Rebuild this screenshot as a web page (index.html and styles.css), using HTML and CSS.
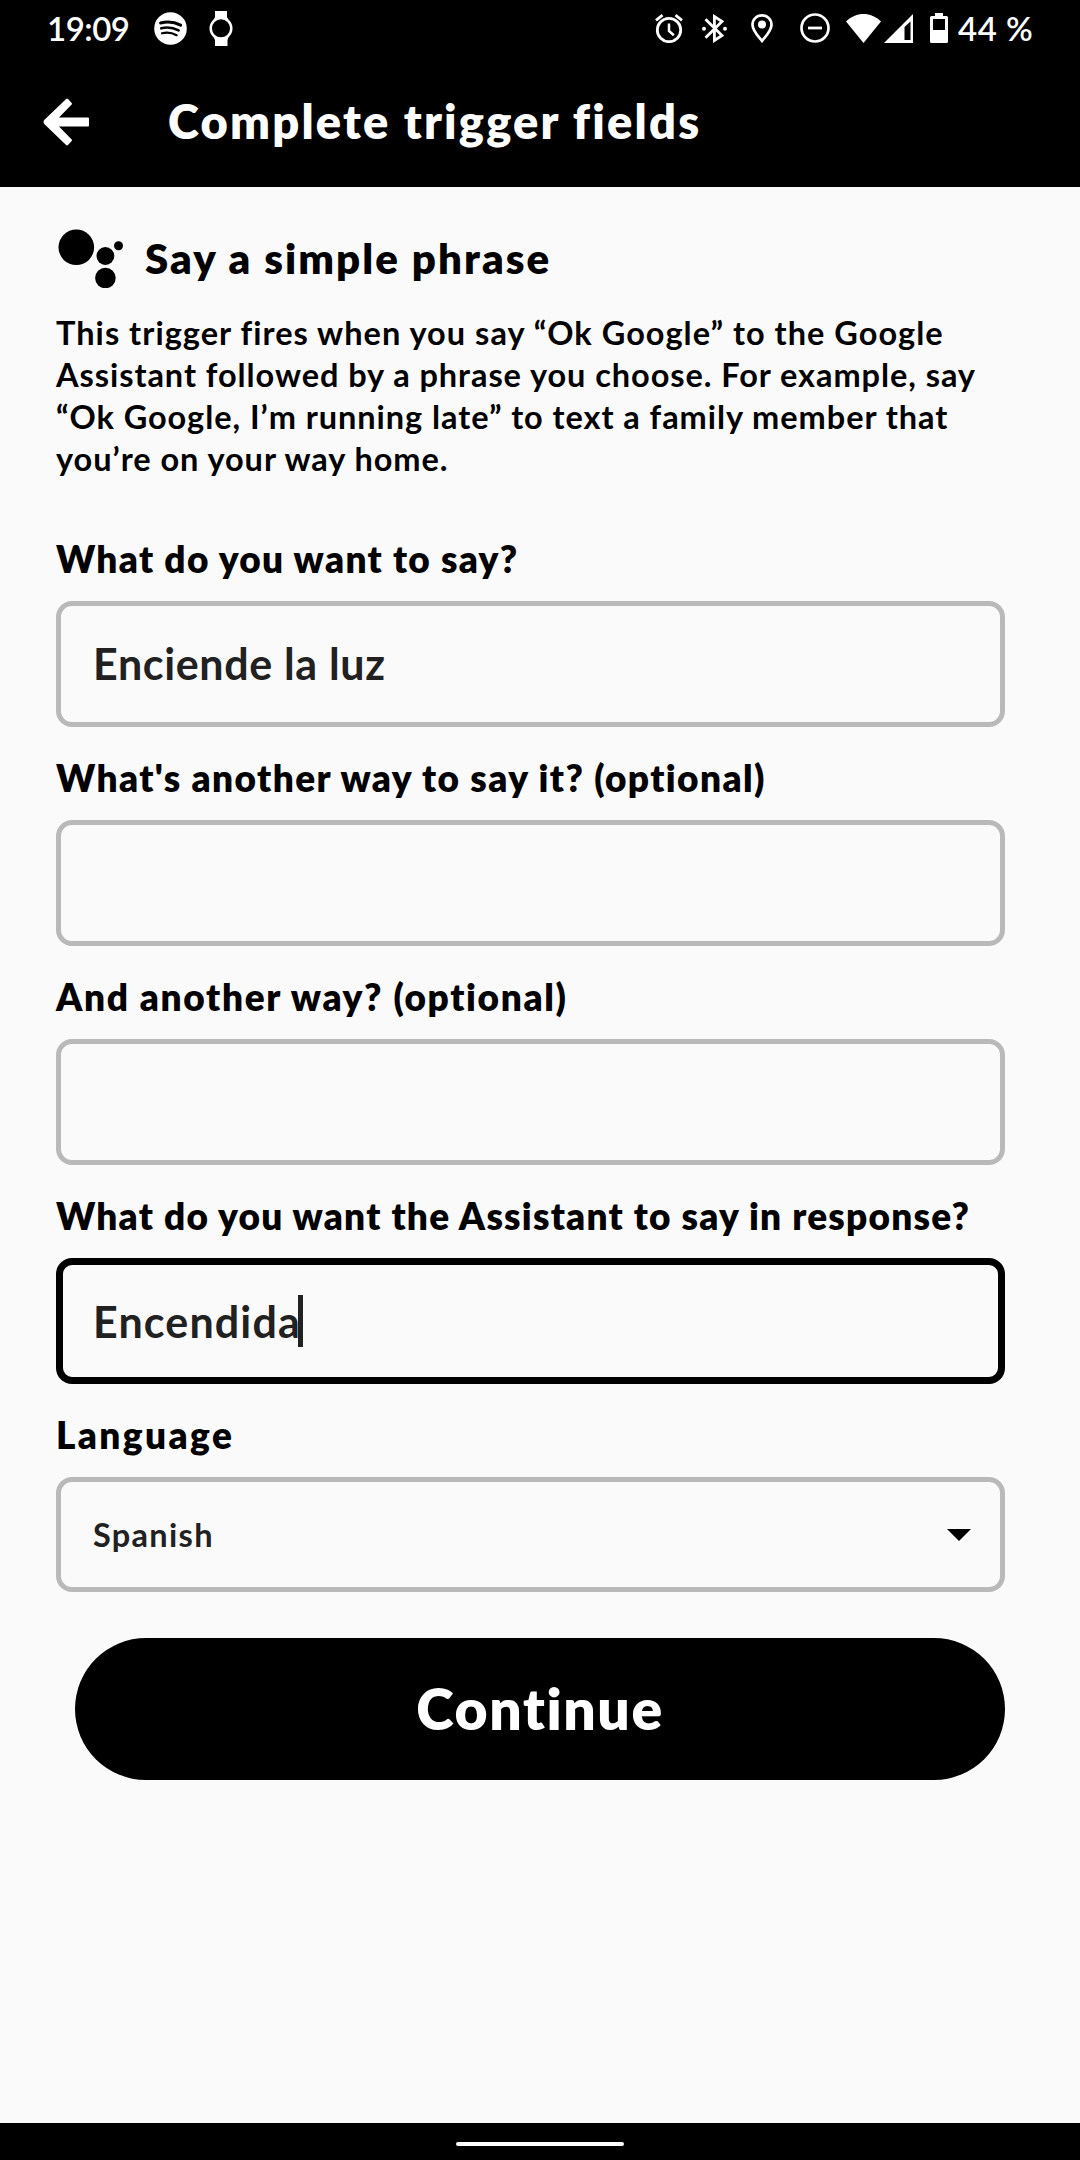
FILE: index.html
```
<!DOCTYPE html>
<html lang="en">
<head>
<meta charset="utf-8">
<title>Complete trigger fields</title>
<link rel="stylesheet" href="styles.css">
</head>
<body>
<div class="screen">
  <div class="status">
    <span class="clock">19:09</span>
    <svg class="spotify" viewBox="0 0 33 33" width="33" height="33">
      <circle cx="16.5" cy="16.5" r="16.3" fill="#fff"/>
      <g fill="none" stroke="#000" stroke-linecap="round">
        <path d="M6.6 11C13.500 9.200 20.500 10 26.600 13.200" stroke-width="3"/>
        <path d="M7.300 16.300C13 14.800 19 15.500 24.600 18.400" stroke-width="2.600"/>
        <path d="M8 21.300C13 20.100 18 20.700 22.600 23.200" stroke-width="2.200"/>
      </g>
    </svg>
    <svg class="watch" viewBox="0 0 24 35" width="24" height="35">
      <path d="M6 0H18V6L20 10H4L6 6ZM4 25H20L18.500 29V35H6V29Z" fill="#fff"/>
      <circle cx="12" cy="17.300" r="10.300" fill="#000" stroke="#fff" stroke-width="2.500"/>
    </svg>
    <div class="tray">
      <svg class="alarm" viewBox="0 0 28 29" width="28" height="29" fill="none" stroke="#fff">
        <circle cx="14" cy="16" r="11.700" stroke-width="2.800"/>
        <path d="M1 6.400L7.500 1.200M27 6.400L20.500 1.200" stroke-width="2.800"/>
        <path d="M14 9.500V17L18.800 21.300" stroke-width="2.500"/>
      </svg>
      <svg class="bluetooth" viewBox="0 0 25 29" width="25" height="29">
        <path d="M3.500 5.300L20 21.500L12.400 26.500V2.500L20 7.500L3.500 23.800" fill="none" stroke="#fff" stroke-width="2.800"/>
        <circle cx="2" cy="14.800" r="2" fill="#fff"/><circle cx="23" cy="14.800" r="2" fill="#fff"/>
      </svg>
      <svg class="pin" viewBox="0 0 22 29" width="22" height="29">
        <path d="M11 1.400C5.500 1.400 1.500 5.500 1.500 10.700C1.500 16.500 6.500 21.500 11 27C15.500 21.500 20.500 16.500 20.500 10.700C20.500 5.500 16.500 1.400 11 1.400Z" fill="none" stroke="#fff" stroke-width="2.700"/>
        <circle cx="11" cy="10.500" r="4" fill="#fff"/>
      </svg>
      <svg class="dnd" viewBox="0 0 30 30" width="30" height="30" fill="none" stroke="#fff">
        <circle cx="15" cy="15" r="13.500" stroke-width="2.700"/>
        <path d="M8 15H22" stroke-width="2.800"/>
      </svg>
      <svg class="wifi" viewBox="0 0 35 29" width="35" height="29">
        <path d="M0 7.500C10 -2.500 25 -2.500 35 7.500L17.500 29Z" fill="#fff"/>
      </svg>
      <svg class="signal" viewBox="0 0 29 29" width="29" height="29">
        <path fill-rule="evenodd" d="M0 29L29 0V29ZM20.500 13V26H26.500V7.500Z" fill="#fff"/>
      </svg>
      <svg class="battery" viewBox="0 0 18 30" width="18" height="30">
        <path fill-rule="evenodd" d="M5 0H13V3H16.500Q18 3 18 4.500V28.500Q18 30 16.500 30H1.500Q0 30 0 28.500V4.500Q0 3 1.500 3H5ZM3 6V17H15V6Z" fill="#fff"/>
      </svg>
      <span class="percent">44 %</span>
    </div>
  </div>
  <header class="appbar">
    <svg class="back" viewBox="0 0 46 48" width="46" height="48">
      <path d="M45 19.500H16L28.700 6.600Q29.300 5.800 28.700 5L25 1Q24 .2 23.100 1L1 22.300Q0 24 1 25.700L23.100 47Q24 47.800 25 47L28.700 43Q29.300 42.200 28.700 41.400L16 28.500H45Q46 28.500 46 27.500V20.500Q46 19.500 45 19.500Z" fill="#fff"/>
    </svg>
    <h1 class="title">Complete trigger fields</h1>
  </header>
  <main class="content">
    <div class="trigger">
      <svg class="assistant" viewBox="0 0 66 60" width="66" height="60">
        <circle cx="18.300" cy="19.300" r="17.800"/>
        <circle cx="47.400" cy="28" r="8.900"/>
        <circle cx="60.500" cy="17.700" r="4.500"/>
        <circle cx="47.400" cy="50" r="10.300"/>
      </svg>
      <h2 class="trigger-name">Say a simple phrase</h2>
    </div>
    <p class="intro">
      <span class="line l1">This trigger fires when you say “Ok Google” to the Google</span>
      <span class="line l2">Assistant followed by a phrase you choose. For example, say</span>
      <span class="line l3">“Ok Google, I’m running late” to text a family member that</span>
      <span class="line l4">you’re on your way home.</span>
    </p>
    <div class="field">
      <div class="label q1">What do you want to say?</div>
      <div class="box v1">Enciende la luz</div>
    </div>
    <div class="field">
      <div class="label q2">What's another way to say it? (optional)</div>
      <div class="box"></div>
    </div>
    <div class="field">
      <div class="label q3">And another way? (optional)</div>
      <div class="box"></div>
    </div>
    <div class="field">
      <div class="label q4">What do you want the Assistant to say in response?</div>
      <div class="box focused v2">Encendida<span class="caret"></span></div>
    </div>
    <div class="field">
      <div class="label q5">Language</div>
      <div class="box select"><span>Spanish</span>
        <svg class="arrow" viewBox="0 0 24 12" width="24" height="12"><path d="M0 0H24L12 12Z"/></svg>
      </div>
    </div>
    <div class="button">Continue</div>
  </main>
  <div class="navbar"><div class="handle"></div></div>
</div>
</body>
</html>
```
FILE: styles.css
```
* { box-sizing: border-box; }
body { margin: 0; font-family: Lato, "Open Sans", sans-serif; color: #000; font-variant-ligatures: none; }
svg { display: block; flex: none; }
.screen { width: 1080px; height: 2160px; display: flex; flex-direction: column; background: #fafafa; }

.status { height: 56px; display: flex; align-items: center; background: #000; color: #fff; padding: 0 48px 0 46px; font-size: 33px; font-weight: 600; white-space: nowrap; }
.clock { width: 108px; letter-spacing: -0.5px; padding: 0 0 1px 1px; }
.watch { margin-left: 22px; }
.tray { display: flex; align-items: center; margin-left: auto; width: 377px; }
.bluetooth { margin-left: 19px; }
.pin { margin-left: 24px; }
.dnd { margin-left: 27px; }
.wifi { margin-left: 16px; }
.signal { margin-left: 3px; }
.battery { margin-left: 17px; }
.percent { margin-left: 10px; letter-spacing: 0.5px; padding-bottom: 1px; }

.appbar { height: 131px; display: flex; align-items: center; background: #000; color: #fff; padding-left: 43px; }
.title { margin: 0 0 1px 79px; font-size: 47px; font-weight: 800; letter-spacing: 2.2px; white-space: nowrap; }

.content { flex: 1; padding: 33px 75px 0 56px; }
.trigger { height: 76px; display: flex; align-items: center; padding-left: 2px; }
.trigger-name { margin: 0 0 0 21px; font-size: 42px; font-weight: 800; letter-spacing: 2.08px; white-space: nowrap; }
.intro { margin: 16px 0 57px; font-size: 32.5px; font-weight: 700; line-height: 42px; }
.line { display: block; white-space: nowrap; }
.l1 { letter-spacing: 1.03px; }
.l2 { letter-spacing: 0.94px; }
.l3 { letter-spacing: 0.95px; }
.l4 { letter-spacing: 0.96px; }

.field + .field { margin-top: 29px; }
.label { font-size: 37px; font-weight: 800; line-height: 44px; white-space: nowrap; margin-bottom: 20px; }
.q1 { letter-spacing: 1.32px; }
.q2 { letter-spacing: 1.4px; }
.q3 { letter-spacing: 1.65px; }
.q4 { letter-spacing: 1.23px; }
.q5 { letter-spacing: 2.4px; }
.box { height: 126px; border: 5px solid #b9b9b9; border-radius: 16px; display: flex; align-items: center; padding: 0 32px 1px; color: #212121; font-size: 43px; font-weight: 700; white-space: nowrap; }
.v1 { letter-spacing: 0.65px; }
.v2 { letter-spacing: 1.15px; }
.focused { border: 7px solid #000; padding: 0 30px; }
.caret { width: 5px; height: 52px; margin-left: -3px; background: #212121; }
.select { height: 115px; font-size: 32.5px; letter-spacing: 1.3px; justify-content: space-between; padding: 0 29px 1px 32px; }
.arrow { margin-top: 2px; }

.button { height: 142px; margin: 46px 0 0 19px; padding-bottom: 2px; border-radius: 71px; background: #000; color: #fff; display: flex; align-items: center; justify-content: center; font-size: 57px; font-weight: 800; letter-spacing: 1.6px; }

.navbar { height: 37px; background: #000; display: flex; justify-content: center; }
.handle { width: 168px; height: 4px; margin-top: 19px; border-radius: 2px; background: #fff; }
```
